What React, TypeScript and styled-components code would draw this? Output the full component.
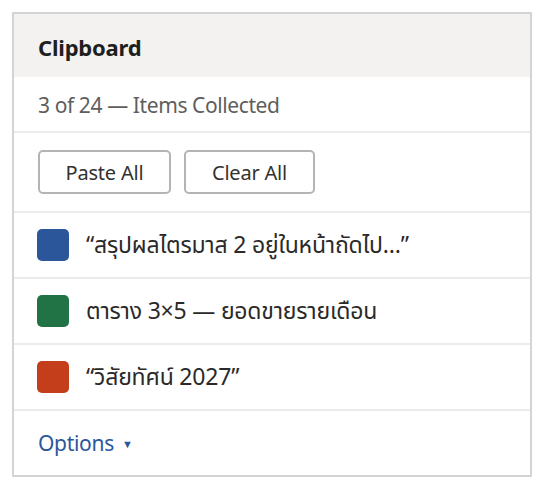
import React from "react";
import styled, { createGlobalStyle } from "styled-components";

const Global = createGlobalStyle`
  html, body { margin: 0; padding: 0; background: #ffffff; }
  body { font-family: "Noto Sans", "Open Sans", "Noto Sans Thai", sans-serif; color: #323130; }
  * { box-sizing: border-box; }
`;

const Page = styled.div`
  padding: 12px;
  width: 543px;
`;

const Panel = styled.section`
  width: 520px;
  border: 2px solid #d4d4d4;
  background: #ffffff;
  display: flex;
  flex-direction: column;
`;

const Header = styled.header`
  height: 63px;
  background: #f3f2f1;
  display: flex;
  align-items: center;
  padding: 2px 24px 0;
  font-size: 22px;
  font-weight: 700;
  letter-spacing: -0.2px;
  color: #201f1e;
`;

const Row = styled.div<{ $h: number; $last?: boolean }>`
  height: ${(p) => p.$h}px;
  display: flex;
  align-items: center;
  gap: 13px;
  padding: 0 24px;
  border-bottom: ${(p) => (p.$last ? "none" : "2px solid #edebe9")};
`;

const Sub = styled.span`
  font-size: 21px;
  letter-spacing: -0.4px;
  color: #605e5c;
  padding-top: 2px;
`;

const Button = styled.button<{ $w: number }>`
  height: 44px;
  width: ${(p) => p.$w}px;
  padding: 0;
  border: 2px solid #b4b4b4;
  border-radius: 5px;
  background: #ffffff;
  font-family: inherit;
  font-size: 20px;
  letter-spacing: -0.2px;
  color: #323130;
`;

const Swatch = styled.span<{ $c: string }>`
  width: 32px;
  height: 32px;
  border-radius: 5px;
  background: ${(p) => p.$c};
  flex: none;
  margin-left: -1px;
  margin-right: 4px;
`;

const ItemText = styled.span`
  font-size: 23px;
  letter-spacing: -0.2px;
  color: #2b2a29;
`;

const Options = styled.span`
  font-size: 21px;
  letter-spacing: -0.3px;
  color: #2b579a;
  display: flex;
  align-items: center;
  gap: 8px;
`;

const Caret = styled.span`
  font-size: 11px;
`;

const items = [
  { c: "#2b579a", t: "“สรุปผลไตรมาส 2 อยู่ในหน้าถัดไป…”" },
  { c: "#217346", t: "ตาราง 3×5 — ยอดขายรายเดือน" },
  { c: "#c43e1c", t: "“วิสัยทัศน์ 2027”" },
];

export default function App() {
  return (
    <Page>
      <Global />
      <Panel>
        <Header>Clipboard</Header>
        <Row $h={56}>
          <Sub>3 of 24 — Items Collected</Sub>
        </Row>
        <Row $h={80}>
          <Button $w={133}>Paste All</Button>
          <Button $w={131}>Clear All</Button>
        </Row>
        {items.map((it) => (
          <Row $h={66} key={it.t}>
            <Swatch $c={it.c} />
            <ItemText>{it.t}</ItemText>
          </Row>
        ))}
        <Row $h={64} $last>
          <Options>
            Options <Caret>▼</Caret>
          </Options>
        </Row>
      </Panel>
    </Page>
  );
}
